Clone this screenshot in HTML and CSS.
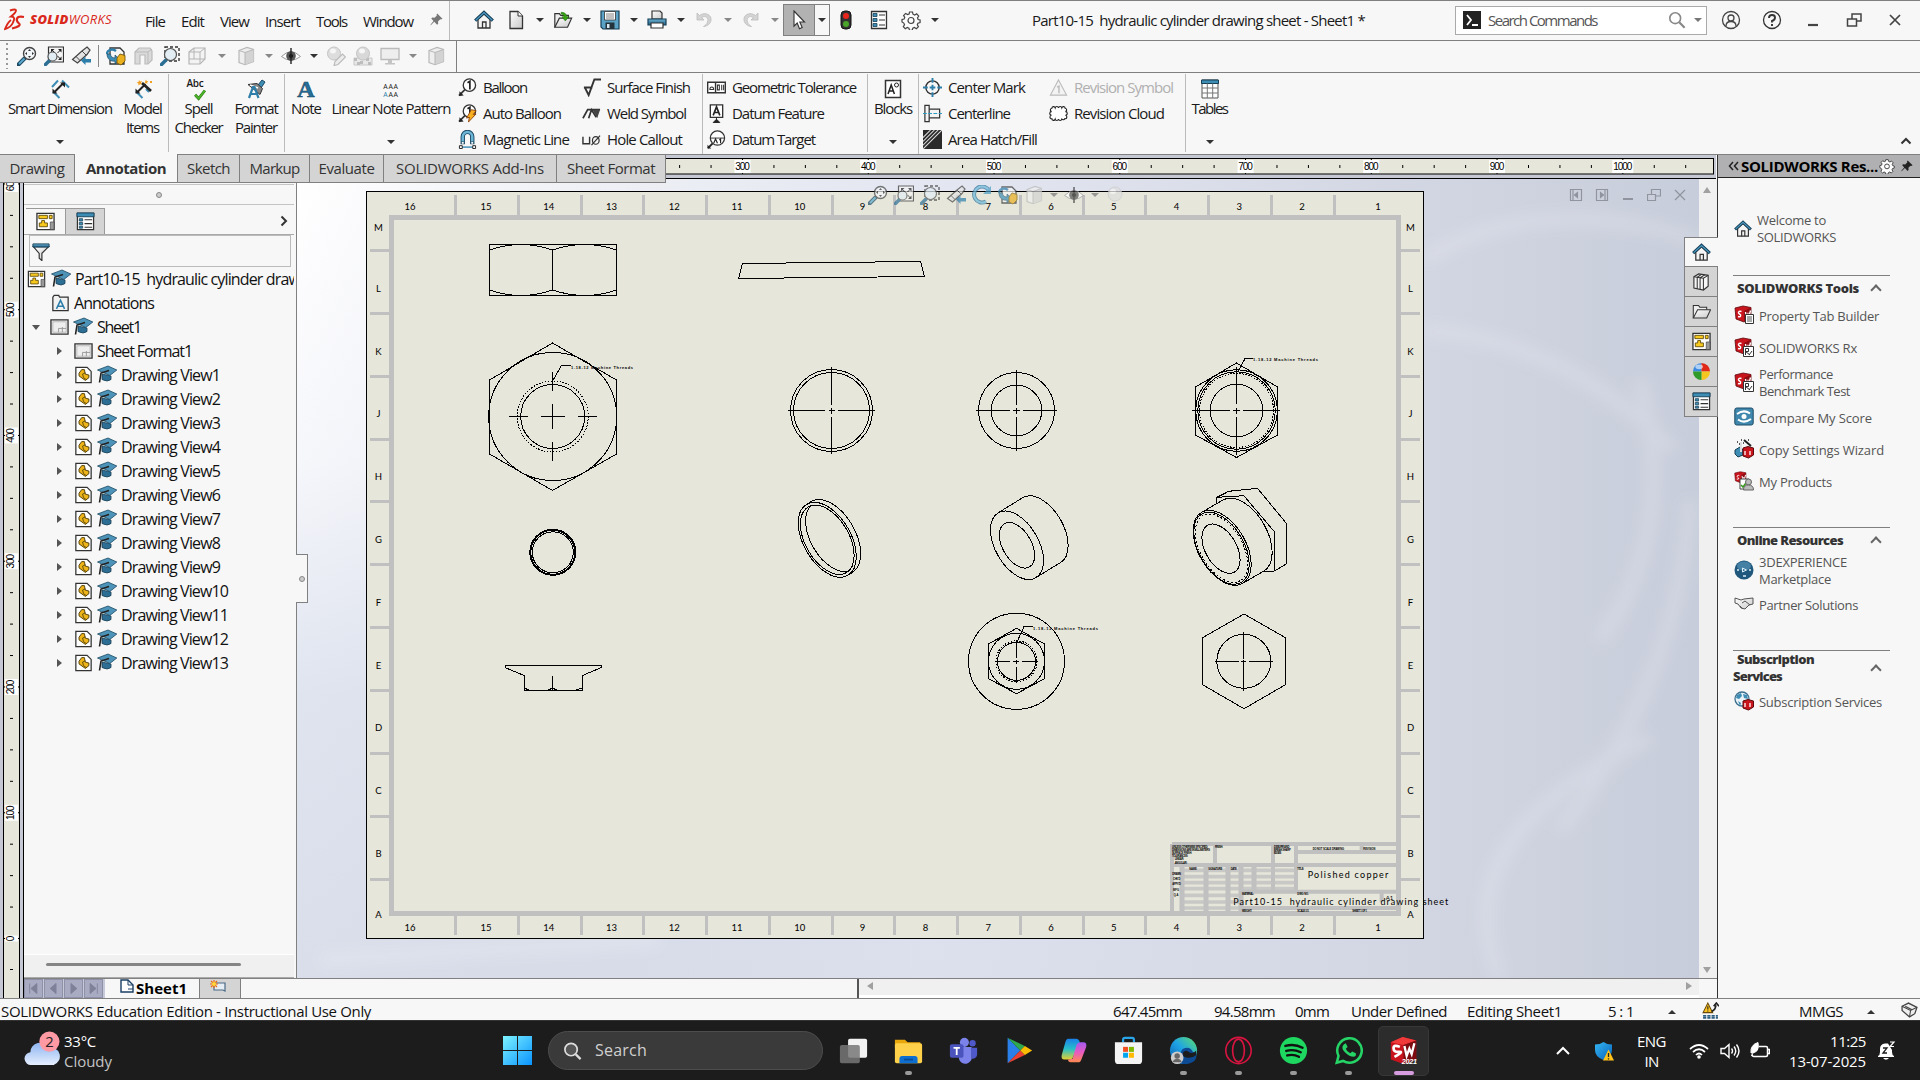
FILE: index.html
```html
<!DOCTYPE html>
<html lang="en">
<head>
<meta charset="utf-8">
<title>Part10-15 hydraulic cylinder drawing sheet - Sheet1</title>
<link rel="stylesheet" href="styles.css">
</head>
<body>
<svg class="defs" width="0" height="0">
  <defs>
    <linearGradient id="gBlue" x1="0" y1="0" x2="0" y2="1"><stop offset="0" stop-color="#6fb3d3"/><stop offset="1" stop-color="#1d5f85"/></linearGradient>
    <linearGradient id="gGrey" x1="0" y1="0" x2="1" y2="1"><stop offset="0" stop-color="#fff"/><stop offset="1" stop-color="#c9c9c9"/></linearGradient>
    <linearGradient id="gWin" x1="0" y1="0" x2="1" y2="1"><stop offset="0" stop-color="#7df3ff"/><stop offset="1" stop-color="#0a93ff"/></linearGradient>
    <linearGradient id="gCloud" x1="0" y1="0" x2="0" y2="1"><stop offset="0" stop-color="#8db4f0"/><stop offset="1" stop-color="#e6efff"/></linearGradient>
    <linearGradient id="gEdge" x1="0" y1="1" x2="1" y2="0"><stop offset="0" stop-color="#0c59a4"/><stop offset=".5" stop-color="#1ea3e6"/><stop offset="1" stop-color="#5fe06a"/></linearGradient>
    <linearGradient id="gCopL" x1="0" y1="0" x2="0" y2="1"><stop offset="0" stop-color="#1b7fe8"/><stop offset=".5" stop-color="#28c0c8"/><stop offset="1" stop-color="#e8d032"/></linearGradient>
    <linearGradient id="gCopR" x1="0" y1="0" x2="0" y2="1"><stop offset="0" stop-color="#a45af0"/><stop offset=".5" stop-color="#e85ac0"/><stop offset="1" stop-color="#ff8a50"/></linearGradient>
    <linearGradient id="gShield" x1="0" y1="0" x2="1" y2="1"><stop offset="0" stop-color="#35b8f5"/><stop offset="1" stop-color="#0860b8"/></linearGradient>
  </defs>

  <symbol id="home" viewBox="0 0 20 20"><path d="M4 9.5V18h12V9.5L10 4z" fill="#f4f4f4" stroke="#333" stroke-width="1.3"/><path d="M8.500 18v-6h3.500v6" fill="none" stroke="#333" stroke-width="1.3"/><path d="M1.200 10.600L10 2.400l8.800 8.200" fill="none" stroke="#163f58" stroke-width="3.200"/><path d="M1.800 10.200L10 2.600l8.200 7.600" fill="none" stroke="#4d9cc4" stroke-width="1.200"/></symbol>
  <symbol id="newdoc" viewBox="0 0 20 20"><path d="M4 1.500h8l4.500 4.500v12.500H4z" fill="url(#gGrey)" stroke="#333" stroke-width="1.3"/><path d="M12 1.500V6h4.500" fill="#fff" stroke="#333" stroke-width="1"/></symbol>
  <symbol id="open" viewBox="0 0 22 20"><path d="M2 18V3h5l1.500 2H17v4" fill="#eee" stroke="#333" stroke-width="1.300"/><path d="M2 18l5-10h13.500L16 18z" fill="url(#gGrey)" stroke="#333" stroke-width="1.300"/><path d="M9 1.500c4 0 6 2 6 5h2.500L13.500 11 9.800 6.500H12C12 4.500 11 3.500 9 3.500z" fill="#36a112" stroke="#1f6b0a" stroke-width=".6"/></symbol>
  <symbol id="save" viewBox="0 0 20 20"><path d="M1 1h18v18H3l-2-2z" fill="#5ba3c6" stroke="#173f56" stroke-width="1.200"/><path d="M4.500 1.500h11V10h-11z" fill="#fff" stroke="#333" stroke-width=".8"/><path d="M6 4h8M6 6h8M6 8h8" stroke="#666" stroke-width=".8"/><path d="M5.500 12.500h9V19h-9z" fill="#23323b"/><path d="M7 14h2.500v4H7z" fill="#d8e8f0"/></symbol>
  <symbol id="print" viewBox="0 0 20 20"><path d="M5 9V1h8l2 2v6z" fill="url(#gGrey)" stroke="#333" stroke-width="1.200"/><path d="M1 9h18v6H1z" fill="url(#gBlue)" stroke="#173f56" stroke-width="1.200"/><path d="M4 13h12v5H4z" fill="#fff" stroke="#333" stroke-width="1.200"/></symbol>
  <symbol id="undo" viewBox="0 0 20 20"><path d="M3 3v7h7L7.500 7.500C12 5 15 8 13.500 12c-.6 2-2 3.500-4 4.500 5-.5 8-4 7.500-8C16.400 4 10 2 5.500 5.500z" fill="#d4d4d4" stroke="#bbb" stroke-width=".8"/></symbol>
  <symbol id="cursor" viewBox="0 0 20 20"><path d="M5 1l10.500 11H10.800l2.400 5.500-2.700 1.200L8.200 13 5 16.200z" fill="#fff" stroke="#333" stroke-width="1.100"/></symbol>
  <symbol id="traffic" viewBox="0 0 20 20"><rect x="5" y="1" width="10" height="18" rx="4" fill="#333" stroke="#111"/><circle cx="10" cy="6" r="3" fill="#e8261c"/><circle cx="10" cy="14" r="3" fill="#4aa52a"/></symbol>
  <symbol id="listp" viewBox="0 0 20 20"><path d="M2.500 1.500h15v17h-15z" fill="#fff" stroke="#333" stroke-width="1.300"/><path d="M4 3.500h4v3H4zM4 8.500h4v3H4zM4 13.500h4v3H4z" fill="#3d8db5" stroke="#173f56" stroke-width=".8"/><path d="M10 5h6M10 10h6M10 15h6" stroke="#333" stroke-width="1.200"/></symbol>
  <symbol id="gear" viewBox="0 0 20 20"><path d="M8.500 2h3l.5 2.200 1.700.8 2-1.200 2 2.200-1.200 1.900.6 1.600 2 .5v2.600l-2.200.6-.6 1.500 1.100 2-2 2-2-1.200-1.600.7-.6 2.100H8.500l-.6-2.200-1.600-.6-2 1.200-2-2 1.200-2-.7-1.600L1 12V9.500l2.100-.5.700-1.600L2.600 5.500l2-2.100 2 1.200 1.500-.6z" fill="#fbfbfb" stroke="#444" stroke-width="1.200"/><circle cx="10" cy="10.500" r="3" fill="none" stroke="#444" stroke-width="1.200"/></symbol>
  <symbol id="pin" viewBox="0 0 20 20"><path d="M11 2l7 7-2 1-1-.5-3 3 .3 3L10.800 17 7 13l-5 5 .2-1.500L6 12 3 8.700l1.500-1.300 3 .3 3-3L10 3.500z" fill="currentColor"/></symbol>
  <symbol id="zoomfit" viewBox="0 0 20 20"><path d="M1.500 18.500l6-6" stroke="#1d4a66" stroke-width="4" stroke-linecap="round"/><path d="M2 18l5.500-5.500" stroke="#5aa9cc" stroke-width="2"/><circle cx="12.500" cy="7.500" r="6" fill="#f2f6f8" stroke="#444" stroke-width="1.400"/><path d="M12.500 3l1.500 2h-3zM12.500 12l1.500-2h-3zM8 7.500l2-1.500v3zM17 7.500l-2-1.500v3z" fill="#333"/></symbol>
  <symbol id="zoomarea" viewBox="0 0 20 20"><path d="M4.500 1h15v15h-15z" fill="#f4f4f4" stroke="#333" stroke-width="1.200"/><path d="M7 3h3.500L7 6.500zM17.500 3H14l3.500 3.500zM17.500 14V10.500L14 14z" fill="#222"/><path d="M8 4l3 3M16.500 4l-3 3M16.500 13l-3-3" stroke="#222"/><path d="M1.500 18.500l4-4" stroke="#2d6f94" stroke-width="3.500" stroke-linecap="round"/><circle cx="8.500" cy="10.500" r="4.500" fill="#e2eef4" stroke="#555" stroke-width="1.200"/></symbol>
  <symbol id="zoomsel" viewBox="0 0 20 20"><path d="M5 1h14v14H5z" fill="none" stroke="#333" stroke-width="1.400" stroke-dasharray="3 2"/><path d="M1.500 18.500l4.500-4.500" stroke="#2d6f94" stroke-width="3.500" stroke-linecap="round"/><circle cx="10.500" cy="8.500" r="6" fill="#e2eef4" stroke="#555" stroke-width="1.200"/></symbol>
  <symbol id="prevview" viewBox="0 0 20 20"><path d="M16 1l3 3-3 4.500L6.500 17 1.500 13.500 11 5z" fill="url(#gGrey)" stroke="#444" stroke-width="1.200"/><path d="M5 10.500l4 4M11 5l4 4" stroke="#444"/><path d="M10 14.500l4.500-4v2.500H20v3.500h-5.500V19z" fill="#2d7faa"/></symbol>
  <symbol id="rebuild" viewBox="0 0 20 20"><path d="M4 8V2h10l4 4v12H4v-4" fill="#f6f6f6" stroke="#333" stroke-width="1.300"/><path d="M1 8c0-4 5-6 9-3" fill="none" stroke="#2d7faa" stroke-width="2.500"/><path d="M1 8c0 5 4 8 8 7v3l5-4.500L9 9v3C6 12 4.500 10 4.500 8z" fill="#3d8db5" stroke="#1d4a66" stroke-width=".7"/><path d="M11 12l3-4 5 1.500V15l-4 4-4-2z" fill="#eab020" stroke="#7a5a08" stroke-width=".9"/></symbol>
  <symbol id="section" viewBox="0 0 20 20"><path d="M2 6l4-4h11l2 3v9l-4 4h-3V9H7v9H2z" fill="#dadada" stroke="#bbb" stroke-width="1.200"/><path d="M2 6h13V18M15 6l4-3" fill="none" stroke="#bbb"/></symbol>
  <symbol id="cubeW" viewBox="0 0 20 20"><path d="M2 6l5-4h11v11l-5 5H2z" fill="#f3f3f3" stroke="#b5b5b5" stroke-width="1.200"/><path d="M2 6h11v12M13 6l5-4M7 2v11H2M7 13h11" fill="none" stroke="#b5b5b5"/></symbol>
  <symbol id="cube" viewBox="0 0 20 20"><path d="M3 4.500L11 1.500l6.500 2v12L9 18.700 3 16.500z" fill="#eee" stroke="#b8b8b8" stroke-width="1.200"/><path d="M9 6.500v12l8.500-3v-12z" fill="#d3d3d3"/><path d="M3 4.500l6 2 8.500-3M9 6.500v12" fill="none" stroke="#b8b8b8"/></symbol>
  <symbol id="eye" viewBox="0 0 20 20"><path d="M.5 10.500Q10 1 19.500 10.500 10 18 .5 10.500z" fill="#fff" stroke="#999" stroke-width="1"/><circle cx="10" cy="10" r="4.800" fill="#555"/><circle cx="10" cy="10" r="2" fill="#111"/><path d="M10 2v16" stroke="#222" stroke-width="1.400"/></symbol>
  <symbol id="ballpen" viewBox="0 0 20 20"><circle cx="8" cy="7.500" r="6.500" fill="#ddd" stroke="#c4c4c4"/><ellipse cx="7" cy="5" rx="3" ry="2.500" fill="#f6f6f6"/><path d="M9 15.500l7.500-7.500 3 3-7.500 7.500-4 1z" fill="#ececec" stroke="#bbb" stroke-width="1.100"/></symbol>
  <symbol id="ballchk" viewBox="0 0 20 20"><path d="M1 12h18v7H1z" fill="#e8e8e8" stroke="#c8c8c8"/><path d="M1 12h3v3H1zM7 15h3v3H7zM13 12h3v3h-3zM4 16h3v3H4zM15 16h3v3h-3z" fill="#bdbdbd"/><circle cx="10" cy="7.500" r="6.500" fill="#d8d8d8" stroke="#c4c4c4"/><ellipse cx="9" cy="5" rx="3" ry="2.500" fill="#f6f6f6"/></symbol>
  <symbol id="ball" viewBox="0 0 20 20"><circle cx="10" cy="9" r="7" fill="#dedede" stroke="#c8c8c8"/><ellipse cx="8" cy="6.500" rx="3" ry="2.500" fill="#fafafa"/></symbol>
  <symbol id="monitor" viewBox="0 0 20 20"><path d="M1 2.500h18v11H1z" fill="#eee" stroke="#bbb" stroke-width="1.300"/><path d="M8 14h4v3h3v1.500H5V17h3z" fill="#c4c4c4"/></symbol>
  <symbol id="rotate" viewBox="0 0 20 20"><path d="M17 5.500A8 8 0 1 0 14 16.500" fill="none" stroke="#2d6f94" stroke-width="4"/><path d="M17 5.500A8 8 0 1 0 14 16.500" fill="none" stroke="#6cb9dc" stroke-width="2.200"/><path d="M19 1v8h-8z" fill="#4a9cc4"/></symbol>
  <symbol id="smartdim" viewBox="0 0 20 20"><path d="M2 8l6-6.500M12 1.500L19 8.500M3 12.500L9.500 19" stroke="#3d8db5" stroke-width="2"/><path d="M4.500 13l9-9" stroke="#222" stroke-width="2"/><path d="M2.500 14.500V9.500l5 5zM15 3.500v5l-5-5z" fill="#222"/></symbol>
  <symbol id="modelitems" viewBox="0 0 20 20"><path d="M3 12.500L9.500 19M13 10l3 3" stroke="#3d8db5" stroke-width="2"/><path d="M4.500 13l8-8" stroke="#222" stroke-width="2"/><path d="M2.500 14.500V9.500l5 5z" fill="#222"/><path d="M9 4l9 8" stroke="#222" stroke-width="2.800"/><path d="M6 1l1 1.500L9 2 8 4l1 1.500-2-.3L5.500 6.500 5.400 4.500 3.500 3.500l2-.6zM13 .5l.8 1.500 1.700.3-1.300 1 .2 1.700-1.400-.9-1.500.6.500-1.600zM17 2h2v2h-2z" fill="#f0a020"/></symbol>
  <symbol id="check" viewBox="0 0 20 20"><path d="M3 11l5 5.500L17 5" fill="none" stroke="#2b7a12" stroke-width="4"/><path d="M3 11l5 5.500L17 5" fill="none" stroke="#4db52a" stroke-width="2.400"/></symbol>
  <symbol id="fmtpaint" viewBox="0 0 20 20"><path d="M12 6l4-5 3 2-4 6z" fill="#3d8db5" stroke="#1d4a66"/><path d="M2 5.500l9-1 5.500 5-2.500 6z" fill="#888" stroke="#333"/><path d="M4 6l8 3" stroke="#fff" stroke-width="1.500"/><path d="M3 19L7 8h1.500l4 11M5 15h6" fill="none" stroke="#2d7faa" stroke-width="2.200"/></symbol>
  <symbol id="balloon" viewBox="0 0 20 20"><path d="M1 18.500l6.500-6.500" stroke="#333" stroke-width="1.800"/><path d="M1.500 19v-5l4.500 4.500z" fill="#222"/><circle cx="12" cy="7.500" r="6.500" fill="#fff" stroke="#333" stroke-width="1.400"/><path d="M10 5l2.500-1.500V12" fill="none" stroke="#222" stroke-width="1.800"/></symbol>
  <symbol id="bolt" viewBox="0 0 20 20"><path d="M14 6l5 1-3 4 3-.5-8 8.500 1-5-3 .8z" fill="#f8b020" stroke="#8a3c08" stroke-width=".9"/></symbol>
  <symbol id="magnet" viewBox="0 0 20 20"><path d="M5 15V7a5 5 0 0 1 10 0v8" fill="none" stroke="#1d4a66" stroke-width="4.600"/><path d="M5 12V7a5 5 0 0 1 10 0v5" fill="none" stroke="#6cb5d6" stroke-width="2.600"/><path d="M4 12.500h2v2H4zM14 12.500h2v2h-2z" fill="#fff"/><path d="M3 18h14" stroke="#3d8db5" stroke-width="1.500"/><path d="M1.500 16.500h3v3h-3zM15.500 16.500h3v3h-3z" fill="#fff" stroke="#222"/></symbol>
  <symbol id="surf" viewBox="0 0 20 20"><path d="M2 10h9M3 10l4 8L13 1.500h7" fill="none" stroke="#333" stroke-width="2"/></symbol>
  <symbol id="weld" viewBox="0 0 20 20"><path d="M1 15L6 6h13M7 15l3-9 5 8" fill="none" stroke="#333" stroke-width="1.800"/><path d="M11 6h8l-3 9z" fill="#444"/></symbol>
  <symbol id="hole" viewBox="0 0 20 20"><path d="M1 7v7.500h7V7" fill="none" stroke="#333" stroke-width="1.500"/><ellipse cx="14.500" cy="11" rx="3.500" ry="4" fill="none" stroke="#333" stroke-width="1.300"/><path d="M10 16l9-10" stroke="#333" stroke-width="1.300"/></symbol>
  <symbol id="geotol" viewBox="0 0 20 20"><path d="M.7 4.500h18.600v11H.7zM9 4.500v11" fill="#fff" stroke="#333" stroke-width="1.500"/><path d="M3 12a2 2.500 0 0 1 4 0zM11 7.500h2v5h-2zM15.500 7v6M17.500 7v6" fill="none" stroke="#333" stroke-width="1.100"/></symbol>
  <symbol id="datumf" viewBox="0 0 20 20"><path d="M3.500 1h13v13h-13z" fill="#fff" stroke="#333" stroke-width="1.400"/><path d="M6.500 12L10 3l3.500 9M7.500 9h5" fill="none" stroke="#222" stroke-width="1.700"/><path d="M10 14v3M6.500 19.500L10 16l3.500 3.500z" fill="#222" stroke="#222"/></symbol>
  <symbol id="datumt" viewBox="0 0 20 20"><path d="M1 19l5-5" stroke="#222" stroke-width="2"/><path d="M.5 19.500v-4l4 4z" fill="#222"/><circle cx="11" cy="8.500" r="7.500" fill="#fff" stroke="#333" stroke-width="1.300"/><path d="M3.500 8.500h15" stroke="#333"/><path d="M7 14l2-4.500 2 4.500M13 10.500l1.300-1V14" fill="none" stroke="#222" stroke-width="1.200"/></symbol>
  <symbol id="blocks" viewBox="0 0 20 20"><path d="M2.500 1.500h15v17h-15z" fill="#fff" stroke="#333" stroke-width="1.500"/><path d="M5 15l3.200-9 3.200 9M6 12h4.500" fill="none" stroke="#222" stroke-width="1.500"/><circle cx="13.500" cy="6" r="2" fill="none" stroke="#222"/></symbol>
  <symbol id="centermark" viewBox="0 0 20 20"><circle cx="10" cy="10" r="7" fill="none" stroke="#333" stroke-width="1.500"/><path d="M10 0v5M10 15v5M0 10h5M15 10h5M10 7v6M7 10h6" stroke="#2d7faa" stroke-width="2"/></symbol>
  <symbol id="centerline" viewBox="0 0 20 20"><path d="M2 1.500h4.500v17H2zM6.500 5.500h11v9h-11z" fill="#f4f4f4" stroke="#333" stroke-width="1.300"/><path d="M0 10h20" stroke="#2d9cc4" stroke-width="1.300" stroke-dasharray="4 1.500"/></symbol>
  <symbol id="hatch" viewBox="0 0 20 20"><path d="M0 0h20v20H0z" fill="#2a2a2a"/><path d="M0 8L8 0M0 12L12 0M0 16L16 0M0 20L20 0" stroke="#ddd" stroke-width="1.100"/></symbol>
  <symbol id="revsym" viewBox="0 0 20 20"><path d="M10 2l8.500 16h-17z" fill="#f3f3f3" stroke="#bbb" stroke-width="1.200"/><path d="M8.500 9.500l2-1V16" fill="none" stroke="#bbb" stroke-width="1.500"/></symbol>
  <symbol id="revcloud" viewBox="0 0 20 20"><path d="M3 4.500a1.800 1.800 0 0 1 3.500-.5 1.800 1.800 0 0 1 3.500 0 1.800 1.800 0 0 1 3.500 0 1.800 1.800 0 0 1 3.500.5 1.800 1.800 0 0 1 .3 3.500 1.800 1.800 0 0 1 0 3.800 1.800 1.800 0 0 1-.8 3.700 1.800 1.800 0 0 1-3 .5 1.800 1.800 0 0 1-3.500 0 1.800 1.800 0 0 1-3.500 0 1.800 1.800 0 0 1-3.500-.5 1.800 1.800 0 0 1-.3-3.700 1.800 1.800 0 0 1 0-3.800 1.800 1.800 0 0 1 .3-3.500z" fill="#fff" stroke="#222" stroke-width="1.200"/></symbol>
  <symbol id="table" viewBox="0 0 20 20"><path d="M2 1h16v18H2z" fill="#fff" stroke="#555"/><path d="M1.500 1h17v3.500h-17z" fill="#3d8db5" stroke="#173f56"/><path d="M2 9h16M2 14h16M7.300 4.500V19M12.700 4.500V19" stroke="#777"/></symbol>
  <symbol id="drwicon" viewBox="0 0 20 20"><path d="M1 1.500h18v17H1z" fill="#fff" stroke="#333" stroke-width="1.400"/><path d="M3 3.500h9v3.500H3zM14 3.500h3v3.500h-3zM6 11.500V9h3v2.500h3v4H3.500v-4z" fill="#f7c81e" stroke="#5a4506" stroke-width=".9"/><path d="M15 10.500h4v8h-4z" fill="#9a9a9a" stroke="#444" stroke-width=".7"/></symbol>
  <symbol id="propicon" viewBox="0 0 20 20"><path d="M1.500 1.500h17v17h-17z" fill="#fff" stroke="#333" stroke-width="1.300"/><path d="M1 1h18v4H1z" fill="#3d8db5" stroke="#173f56"/><path d="M3.500 7h3.500v2.500H3.500zM3.500 11h3.500v2.500H3.500zM3.500 15h3.500v2H3.500z" fill="#3d8db5" stroke="#173f56" stroke-width=".8"/><path d="M9 8.200h8M9 12.200h8M9 16h8" stroke="#333" stroke-width="1.200"/></symbol>
  <symbol id="funnel" viewBox="0 0 20 20"><path d="M1.500 4l6.500 7.500V17l3 2.500v-8L18.500 4z" fill="url(#gGrey)" stroke="#333" stroke-width="1.300"/><path d="M1 1h18v3.500H1z" fill="url(#gBlue)" stroke="#173f56"/></symbol>
  <symbol id="hat" viewBox="0 0 20 18"><path d="M5 9l9 2v3.500q-3.500 3-9 0z" fill="#2d6f94" stroke="#173f56" stroke-width=".8"/><path d="M.5 5L11 1l8.800 4-7 5.500z" fill="#4d93b8" stroke="#1d4a66" stroke-width=".8"/><path d="M12 5.500L4 8 2.500 17.500" fill="none" stroke="#222" stroke-width="1.600"/></symbol>
  <symbol id="annot" viewBox="0 0 20 20"><path d="M1.500 18.500v-15L3 1.500h5l1 2h9.500v15z" fill="#f2f2f2" stroke="#333" stroke-width="1.400"/><path d="M5.500 16.500L10 7l4.500 9.500M7.500 13.500h5" fill="none" stroke="#2d7faa" stroke-width="1.700"/></symbol>
  <symbol id="sheet" viewBox="0 0 20 17"><path d="M1 1h18v15H1z" fill="#eee" stroke="#333" stroke-width="1.400"/><path d="M3 3h14v11H3z" fill="none" stroke="#bbb"/><path d="M9 14v-4h8M13 8.500V14" fill="none" stroke="#999"/></symbol>
  <symbol id="dview" viewBox="0 0 20 20"><path d="M1.500 1.500h12.500l4.500 4.500v12.500h-17z" fill="#fff" stroke="#333" stroke-width="1.400"/><path d="M5 8l3-4h3l1 5 4 1v3l-4 3-7-5z" fill="#edb51a" stroke="#4a3906" stroke-width="1"/><path d="M9 9l1 4 3 2M9 9l3-1.500" fill="none" stroke="#4a3906" stroke-width=".9"/></symbol>
  <symbol id="books" viewBox="0 0 20 20"><path d="M2 5l5-3 10 1.500V15l-5 4-10-2z" fill="#f6f6f6" stroke="#333" stroke-width="1.200"/><path d="M2 5l10 1.500L17 3.500M12 6.500V19M5.500 5.500v12M8.500 6v12.500M5.500 5.500l4.500-3M8.500 6l5-3" fill="none" stroke="#333" stroke-width="1.100"/></symbol>
  <symbol id="folder" viewBox="0 0 22 20"><path d="M1.500 17.500V3h6l1.500 2h8v3" fill="#eee" stroke="#333" stroke-width="1.200"/><path d="M1.500 17.500l5-9.500h15l-4.500 9.500z" fill="url(#gGrey)" stroke="#333" stroke-width="1.200"/></symbol>
  <symbol id="sphere" viewBox="0 0 20 20"><path d="M10 10V1a9 9 0 0 0-9 9z" fill="#3a8ae0"/><path d="M10 10h9a9 9 0 0 0-9-9z" fill="#e02818"/><path d="M10 10v9a9 9 0 0 0 9-9z" fill="#f5c520"/><path d="M10 10H1a9 9 0 0 0 9 9z" fill="#2f9a28"/><ellipse cx="7.500" cy="5" rx="4" ry="2.500" fill="#fff" opacity=".6"/></symbol>
  <symbol id="sw" viewBox="0 0 20 20"><path d="M1 3l8-2 8 1.500V13l-7 4-8-3z" fill="#c8141c" stroke="#5c080c" stroke-width=".8"/><path d="M10 6v11l7-4V2.500z" fill="#8e0c12"/><path d="M7.500 6.500c-3-1-4 1.500-2 2.500s1.500 3.500-1.500 2.500M11.500 7l1 6 1.500-4 1 2.500 1.500-6" fill="none" stroke="#fff" stroke-width="1.400"/></symbol>
  <symbol id="rx" viewBox="0 0 20 20"><path d="M9.500 9.500h10v10h-10z" fill="#fff" stroke="#333"/><path d="M11.500 18v-6.500h3v3h-3l4.500 3.500M18 14l-3 4" fill="none" stroke="#333"/></symbol>
  <symbol id="doc" viewBox="0 0 20 20"><path d="M11.500 9.500h8v9h-8z" fill="#fff" stroke="#333"/><path d="M13 12h5M13 14h5M13 16h5" stroke="#555"/></symbol>
  <symbol id="score" viewBox="0 0 20 20"><rect x=".8" y="1" width="18.400" height="17" rx="2" fill="#3f87ad" stroke="#1d4a66"/><circle cx="10" cy="9.500" r="2.500" fill="#fff"/><path d="M3 7q7-5 13-.5M17 12q-7 5-13 .5" fill="none" stroke="#fff" stroke-width="2"/></symbol>
  <symbol id="wizard" viewBox="0 0 20 20"><path d="M1 11l5-3 3 3v5l-5 2-3-3z" fill="#3d8db5" stroke="#173f56"/><path d="M9 9l5-1.500 5.500 1.500v7l-5 3-5.500-2z" fill="#c8141c" stroke="#5c080c"/><path d="M11 12v4M16 12v4" stroke="#fff" stroke-width="1.300"/><path d="M10 1l7 6" stroke="#222" stroke-width="2"/><path d="M3 3h1M7 1h1M5 5h1M9 4h1M14 1h1" stroke="#222" stroke-width="1.500"/><path d="M7 3v10" stroke="#ddd" stroke-width="2"/></symbol>
  <symbol id="person" viewBox="0 0 20 20"><path d="M6 8h9v10H6z" fill="#fff" stroke="#444"/><path d="M7 14l2 2 3-4" fill="none" stroke="#3a9a20" stroke-width="1.600"/><circle cx="14.500" cy="11" r="3" fill="#bbb" stroke="#666"/><path d="M9.500 19q0-5 5-5t5 5z" fill="#bbb" stroke="#666"/></symbol>
  <symbol id="globe3d" viewBox="0 0 20 20"><circle cx="10" cy="10" r="9.500" fill="#1f587c"/><ellipse cx="10" cy="6" rx="7" ry="4.500" fill="#5f9cc0" opacity=".6"/><path d="M8.500 8l4 2-4 2z" fill="none" stroke="#d8ecf6"/><path d="M3 10h2M15 10h2M9 16h3" stroke="#d8ecf6" stroke-width="1.500"/></symbol>
  <symbol id="hands" viewBox="0 0 20 20"><path d="M1 4l6 2 3-1 9-1v6l-4 1-4 4-4-1-3-4-3-1z" fill="url(#gGrey)" stroke="#555"/><path d="M8 9l3-2 5 4M6 12l3 3" fill="none" stroke="#555"/></symbol>
  <symbol id="subs" viewBox="0 0 20 20"><circle cx="8" cy="8" r="7" fill="#e8f2f7" stroke="#3b6f8e" stroke-width="1.300"/><path d="M3 4l4-2 1 3-3 3-3-1zM9 3l4 1 1 4-4-1zM4 10l3 2-1 3z" fill="#3d8db5"/><path d="M9 10l5-1.500 5.500 1.500v6l-5 3-5.500-2z" fill="#c8141c" stroke="#5c080c"/><path d="M11 12v4M16 12v4" stroke="#fff" stroke-width="1.300"/></symbol>
</svg>

<header class="titlebar">
  <div class="brand">
    <svg class="ds" viewBox="0 0 21 24"><path d="M6 2.500q6-2 6 0t-5 6q5 0 2 6-2 5-8 6.500 3-7 6-9" fill="none" stroke="#da291c" stroke-width="1.900"/><path d="M20 9q-6-1-7 1.500t2 5-7 5" fill="none" stroke="#da291c" stroke-width="2.200"/></svg>
    <span class="brand-name" data-w="82"><b>SOLID</b>WORKS</span>
  </div>
  <nav class="menu">
    <span data-w="20">File</span><span data-w="23">Edit</span><span data-w="29">View</span><span data-w="35">Insert</span><span data-w="31">Tools</span><span data-w="50">Window</span>
  </nav>
  <svg class="menu-pin"><use href="#pin"/></svg>
  <div class="quick">
    <svg><use href="#home"/></svg><svg><use href="#newdoc"/></svg><i class="caret"></i><svg><use href="#open"/></svg><i class="caret"></i><svg><use href="#save"/></svg><i class="caret"></i><svg><use href="#print"/></svg><i class="caret"></i><svg><use href="#undo"/></svg><i class="caret dim"></i><svg class="flip"><use href="#undo"/></svg><i class="caret dim"></i><span class="cursor-btn"><svg><use href="#cursor"/></svg></span><span class="cursor-drop"><i class="caret"></i></span><svg><use href="#traffic"/></svg><svg><use href="#listp"/></svg><svg><use href="#gear"/></svg><i class="caret"></i>
  </div>
  <div class="doc-title"><span data-w="333">Part10-15  hydraulic cylinder drawing sheet - Sheet1 *</span></div>
  <div class="search">
    <svg viewBox="0 0 18 18" width="18" height="18"><path d="M0 0h18v18H0z" fill="#222"/><path d="M4 4l4 5-4 5M9 14h6" fill="none" stroke="#fff" stroke-width="1.800"/></svg>
    <span data-w="109">Search Commands</span>
    <svg class="mag" viewBox="0 0 20 20"><circle cx="8" cy="8" r="6" fill="none" stroke="#888" stroke-width="1.800"/><path d="M12.500 12.500l6 6" stroke="#888" stroke-width="2.400"/></svg>
    <i class="caret"></i>
  </div>
  <div class="win">
    <svg viewBox="0 0 20 20"><circle cx="10" cy="10" r="8.500" fill="none" stroke="#444" stroke-width="1.300"/><circle cx="10" cy="8" r="3" fill="none" stroke="#444" stroke-width="1.300"/><path d="M5 16q0-4.500 5-4.500t5 4.500" fill="none" stroke="#444" stroke-width="1.300"/></svg>
    <svg viewBox="0 0 20 20"><circle cx="10" cy="10" r="8.500" fill="none" stroke="#333" stroke-width="1.300"/><path d="M7 8q0-3 3-3t3 2.500-3 3.500v1.500M10 14v2" fill="none" stroke="#333" stroke-width="1.900"/></svg>
    <svg viewBox="0 0 20 20"><path d="M5 15h10" stroke="#444" stroke-width="2.200"/></svg>
    <svg viewBox="0 0 20 20"><path d="M3.500 9h9v7h-9zM8 9V4h9v7h-4.500" fill="none" stroke="#444" stroke-width="1.500"/></svg>
    <svg viewBox="0 0 20 20"><path d="M5 5l10 10M15 5L5 15" stroke="#444" stroke-width="1.700"/></svg>
  </div>
</header>

<div class="viewbar">
  <div class="viewtools">
    <i class="grip"></i>
    <svg><use href="#zoomfit"/></svg><svg><use href="#zoomarea"/></svg><svg><use href="#prevview"/></svg><i class="vline"></i><svg><use href="#rebuild"/></svg><svg><use href="#section"/></svg><svg><use href="#zoomsel"/></svg><svg><use href="#cubeW"/></svg><i class="caret dim"></i><svg><use href="#cube"/></svg><i class="caret dim"></i><svg><use href="#eye"/></svg><i class="caret"></i><svg><use href="#ballpen"/></svg><svg><use href="#ballchk"/></svg><svg><use href="#monitor"/></svg><i class="caret dim"></i><svg><use href="#cube"/></svg>
  </div>
</div>

<section class="ribbon">
  <div class="big w120"><svg><use href="#smartdim"/></svg><span data-w="104">Smart Dimension</span><i class="caret"></i></div>
  <div class="big w48"><svg><use href="#modelitems"/></svg><span data-w="38">Model</span><span data-w="33">Items</span></div>
  <div class="big w60 split"><div class="abc"><b data-w="17">Abc</b><svg><use href="#check"/></svg></div><span data-w="28">Spell</span><span data-w="48">Checker</span></div>
  <div class="big w56"><svg><use href="#fmtpaint"/></svg><span data-w="43">Format</span><span data-w="42">Painter</span></div>
  <div class="big w42 split"><b class="note-a">A</b><span data-w="30">Note</span></div>
  <div class="big w128"><div class="aaa"><span>AAA</span><span><em>A</em>AA</span></div><span data-w="119">Linear Note Pattern</span><i class="caret"></i></div>
  <div class="stack w124 first">
    <div><svg><use href="#balloon"/></svg><span data-w="44">Balloon</span></div>
    <div><svg viewBox="0 0 20 20"><use href="#balloon"/><use href="#bolt"/></svg><span data-w="78">Auto Balloon</span></div>
    <div><svg><use href="#magnet"/></svg><span data-w="86">Magnetic Line</span></div>
  </div>
  <div class="stack w122">
    <div><svg><use href="#surf"/></svg><span data-w="83">Surface Finish</span></div>
    <div><svg><use href="#weld"/></svg><span data-w="79">Weld Symbol</span></div>
    <div><svg><use href="#hole"/></svg><span data-w="75">Hole Callout</span></div>
  </div>
  <div class="stack w165 split">
    <div><svg><use href="#geotol"/></svg><span data-w="124">Geometric Tolerance</span></div>
    <div><svg><use href="#datumf"/></svg><span data-w="92">Datum Feature</span></div>
    <div><svg><use href="#datumt"/></svg><span data-w="83">Datum Target</span></div>
  </div>
  <div class="big w50 split"><svg><use href="#blocks"/></svg><span data-w="38">Blocks</span><i class="caret"></i></div>
  <div class="stack w127 split">
    <div><svg><use href="#centermark"/></svg><span data-w="77">Center Mark</span></div>
    <div><svg><use href="#centerline"/></svg><span data-w="62">Centerline</span></div>
    <div><svg><use href="#hatch"/></svg><span data-w="89">Area Hatch/Fill</span></div>
  </div>
  <div class="stack w140">
    <div class="off"><svg><use href="#revsym"/></svg><span data-w="99">Revision Symbol</span></div>
    <div><svg><use href="#revcloud"/></svg><span data-w="90">Revision Cloud</span></div>
  </div>
  <div class="big w48 split"><svg><use href="#table"/></svg><span data-w="36">Tables</span><i class="caret"></i></div>
  <svg class="collapse" viewBox="0 0 12 8"><path d="M1.500 6.500L6 2l4.500 4.500" fill="none" stroke="#333" stroke-width="2"/></svg>
</section>

<main class="work">
  <div class="left">
    <div class="tabrow">
      <div class="tab t1"><span data-w="55">Drawing</span></div>
      <div class="tab t2 on"><span data-w="80">Annotation</span></div>
      <div class="tab t3"><span data-w="43">Sketch</span></div>
      <div class="tab t4"><span data-w="50">Markup</span></div>
      <div class="tab t5"><span data-w="56">Evaluate</span></div>
      <div class="tab t6"><span data-w="148">SOLIDWORKS Add-Ins</span></div>
      <div class="tab t7"><span data-w="88">Sheet Format</span></div>
      <svg id="hruler" class="hruler" viewBox="666 155 1050 24"><rect x="666" y="155" width="1050" height="24" fill="#c6c9d3"/><rect x="640" y="158.500" width="1073.500" height="15.500" fill="#e6e6da" stroke="#000"/><path d="M666 178.500h1050" stroke="#000"/></svg>
    </div>
    <div class="body">
      <svg id="vruler" class="vruler" viewBox="0 183 24 815"><rect x="0" y="183" width="24" height="815" fill="#c6c9d3"/><rect x="3.500" y="170" width="16" height="850" fill="#e6e6da" stroke="#000"/><path d="M23.500 183v815" stroke="#000"/></svg>
      <div class="center">
        <div class="upper">
          <aside class="tree-panel">
            <div class="dotbar"><i class="dot"></i></div>
            <div class="ptabs"><span class="pt on"><svg><use href="#drwicon"/></svg></span><span class="pt"><svg><use href="#propicon"/></svg></span><svg class="chev" viewBox="0 0 8 12"><path d="M1.500 1.500L6 6l-4.500 4.500" fill="none" stroke="#333" stroke-width="2"/></svg></div>
            <div class="filter"><svg><use href="#funnel"/></svg></div>
            <ul id="tree" class="tree">
              <li class="l0"><svg><use href="#drwicon"/></svg><svg class="hat"><use href="#hat"/></svg><span class="long" data-w="245">Part10-15  hydraulic cylinder drawing</span></li>
              <li class="l1"><svg><use href="#annot"/></svg><span data-w="80">Annotations</span></li>
              <li class="l2"><i class="down"></i><svg><use href="#sheet"/></svg><svg class="hat"><use href="#hat"/></svg><span data-w="44">Sheet1</span></li>
              <li class="l3"><i class="right"></i><svg><use href="#sheet"/></svg><span data-w="95">Sheet Format1</span></li>
            </ul>
            <div class="hs"><i></i></div>
          </aside>
          <div class="canvas">
            <svg class="drawing" viewBox="297 179 1402 799">
              <defs>
                <linearGradient id="bg" x1="0" y1="0" x2="0" y2="1"><stop offset="0" stop-color="#fff"/><stop offset=".35" stop-color="#f6f7fb"/><stop offset=".65" stop-color="#dfe4ef"/><stop offset="1" stop-color="#d9deea"/></linearGradient>
                <linearGradient id="bgR" x1="0" y1="0" x2="1" y2="0"><stop offset="0" stop-color="#cdd2df" stop-opacity="0"/><stop offset=".45" stop-color="#dde1ee" stop-opacity=".8"/><stop offset=".8" stop-color="#d2d6e2"/><stop offset="1" stop-color="#c8cddb"/></linearGradient>
                <clipPath id="ringClip"><ellipse cx="827.300" cy="539.800" rx="38" ry="21.900" transform="rotate(60 827.300 539.800)"/></clipPath>
                <filter id="soft" x="-20%" y="-20%" width="140%" height="140%"><feGaussianBlur stdDeviation="7"/></filter>
              </defs>
              <rect x="297" y="179" width="1402" height="799" fill="url(#bg)"/>
              <rect x="297" y="179" width="1402" height="799" fill="url(#bgR)"/>
              <g fill="none" stroke="#fff" stroke-opacity=".16" stroke-width="14" filter="url(#soft)">
                <path d="M1424 330q140 10 250 120M1424 260q110-70 275-20M1640 380q40 150-40 260M1690 500q-10 180-130 330M1500 978q-60-140 150-240M320 960l340-20"/>
              </g>
              <rect x="366.500" y="191.500" width="1057" height="747" fill="#e6e6da" stroke="#000" shape-rendering="crispEdges"/>
              <g id="frame" stroke="#c0c0c0" stroke-width="3" fill="none" shape-rendering="crispEdges">
                <rect x="391.500" y="217.500" width="1007" height="696" stroke-width="5"/>
              </g>
              <g id="zones" class="zones"></g>

              <g class="views">
                <rect x="489.500" y="244.500" width="127" height="51"/>
                <path d="M552.500 250v40M489.500 250Q521 239 552.500 250 585 239 616.500 250M489.500 290Q521 301 552.500 290 585 301 616.500 290"/>
                <path d="M742.500 263.500L920.500 261.500 924.500 276.500 738.500 278.500z"/>

                <path d="M552.500 343L616.500 380V454L552.500 490.500 489.500 454V380z"/>
                <circle cx="552.700" cy="416.500" r="64"/><circle cx="552.700" cy="416.500" r="32"/><circle cx="552.700" cy="416.500" r="35.500" stroke-dasharray="1.500 1.500"/>
                <path d="M509 416.500h19M541 416.500h24M578 416.500h19M552.500 372v19M552.500 404v25M552.500 442v19M552.500 381L561.500 365.500H571"/>

                <circle cx="831.500" cy="410.500" r="41"/><circle cx="831.500" cy="410.500" r="38"/>
                <path d="M788 410.500h37M829 410.500h6M838 410.500h37M831.500 367v38M831.500 408v6M831.500 417v37"/>

                <circle cx="1016.500" cy="410.500" r="38"/><circle cx="1016.500" cy="410.500" r="25.300"/>
                <path d="M976 410.500h34M1013 410.500h7M1023 410.500h34M1016.500 370v35M1016.500 408v6M1016.500 417v34"/>

                <path d="M1236.500 363L1277.500 387V435L1236.500 457.500 1195.500 435V387z"/>
                <circle cx="1236.500" cy="410.500" r="40.800"/><circle cx="1236.500" cy="410.500" r="38.700"/><circle cx="1236.500" cy="410.500" r="37" stroke-dasharray="1.500 1.500"/><circle cx="1236.500" cy="410.500" r="26.300"/>
                <path d="M1192 410.500h38M1233 410.500h7M1243 410.500h37M1236.500 367v37M1236.500 408v6M1236.500 417v38M1238 372L1245 358.500H1253"/>

                <circle cx="552.800" cy="552.300" r="23"/><circle cx="552.800" cy="552.300" r="22"/><circle cx="552.800" cy="552.300" r="20.500"/>

                <ellipse cx="827.300" cy="539.800" rx="41" ry="23.700" transform="rotate(60 827.300 539.800)"/>
                <ellipse cx="827.300" cy="539.800" rx="38" ry="21.900" transform="rotate(60 827.300 539.800)"/>
                <g clip-path="url(#ringClip)"><ellipse cx="832.500" cy="536.800" rx="38" ry="21.900" transform="rotate(60 832.500 536.800)"/></g>
                <path d="M806.800 504.300L811.500 501.300A41 23.700 60 0 1 852.500 572.300L847.800 575.300"/>

                <ellipse cx="1017" cy="545.300" rx="37.500" ry="21.600" transform="rotate(60 1017 545.300)"/>
                <ellipse cx="1017" cy="545.300" rx="25" ry="14.400" transform="rotate(60 1017 545.300)"/>
                <path d="M998.200 512.800L1022.900 497.600A37.500 21.600 60 0 1 1060.400 562.600L1035.700 577.800"/>

                <ellipse cx="1222.200" cy="547.800" rx="41" ry="23.700" transform="rotate(60 1222.200 547.800)"/>
                <ellipse cx="1221.500" cy="548.200" rx="39.500" ry="22.500" transform="rotate(60 1221.500 548.200)"/>
                <ellipse cx="1221.500" cy="548.200" rx="37.500" ry="21" stroke-dasharray="2 2" transform="rotate(60 1221.500 548.200)"/>
                <ellipse cx="1221" cy="548.700" rx="27" ry="15.600" transform="rotate(60 1221 548.700)"/>
                <path d="M1201.700 512.300L1223 500A41 23.700 60 0 1 1264 571L1242.700 583.300"/>
                <path d="M1216.900 503V497.300L1228.800 491.300 1257.500 488.300 1286.300 523.300V564L1274.400 571 1263 571.700M1216.900 497.300L1243.800 495.700 1274.400 531.700V571"/>

                <path d="M505 665.500H601.500V667.500L582 675.700V690.500H524.500V675.700L505 667.500zM552.500 675.700V690M524.500 688l4 2h20l4-2 4 2h20l5-2"/>

                <circle cx="1016.500" cy="661.300" r="48"/><path d="M1016.500 628.300L1044.500 644V678.700L1016.500 693.700 988.500 678.700V644z"/><circle cx="1016.500" cy="661.300" r="28"/><circle cx="1016.500" cy="661.300" r="19"/><circle cx="1016.500" cy="661.300" r="20.500" stroke-dasharray="1.500 1.500"/>
                <path d="M995 661.500h15M1013 661.500h6M1022 661.500h16M1016.500 640v18M1016.500 660v4M1016.500 667v16M1017 642L1024 626.500H1033"/>

                <path d="M1244 614L1285.500 637.700V684.700L1244 708.700 1202.500 684.700V637.700z"/><circle cx="1243.800" cy="661.300" r="27"/>
                <path d="M1215 661.500h24M1241 661.500h5M1249 661.500h24M1243.500 632v27M1243.500 660v4M1243.500 664v27"/>
              </g>
              <g class="callouts">
                <text x="571" y="368.500" textLength="62">1.18-12 Machine Threads</text>
                <text x="1253" y="361" textLength="65">1.18-12 Machine Threads</text>
                <text x="1033" y="629.500" textLength="65">1.18-12 Machine Threads</text>
              </g>

              <g transform="translate(1140 820) scale(.33333)">
                <g stroke="#c0c0c0" fill="none" stroke-width="12">
                  <path d="M96 72H776M96 72V280M225 72V135M399 72V215M468 72V215M665 72V95M468 96H776M96 135H776M468 215H776M300 215H468M300 264H776M725 215V245"/>
                  <path stroke-width="15" d="M126 140V280M198 140V280M264 140V280M303 140V280M342 140V210"/>
                  <path stroke-width="11" d="M126 151H468M126 170H468M126 188H468M126 206H468M126 226H300M126 246H300M126 264H300" stroke-opacity=".8"/>
                </g>
                <g class="tb-small">
                  <text x="96" y="84" textLength="108">UNLESS OTHERWISE SPECIFIED:</text><text x="96" y="93" textLength="114">DIMENSIONS ARE IN MILLIMETERS</text><text x="96" y="102" textLength="60">SURFACE FINISH:</text><text x="96" y="111" textLength="48">TOLERANCES:</text><text x="104" y="120" textLength="28">LINEAR:</text><text x="104" y="131" textLength="38">ANGULAR:</text>
                  <text x="225" y="84" textLength="24">FINISH:</text><text x="402" y="84" textLength="46">DEBURR AND</text><text x="402" y="93" textLength="50">BREAK SHARP</text><text x="402" y="102" textLength="22">EDGES</text>
                  <text x="518" y="90" textLength="94">DO NOT SCALE DRAWING</text><text x="670" y="90" textLength="36">REVISION</text>
                  <text x="148" y="150" textLength="22">NAME</text><text x="205" y="150" textLength="42">SIGNATURE</text><text x="272" y="150" textLength="18">DATE</text>
                  <text x="97" y="164" textLength="26">DRAWN</text><text x="99" y="179" textLength="22">CHK'D</text><text x="97" y="194" textLength="26">APPV'D</text><text x="99" y="212" textLength="18">MFG</text><text x="101" y="227" textLength="14">Q.A</text>
                  <text x="472" y="149" textLength="20">TITLE:</text><text x="306" y="224" textLength="36">MATERIAL:</text><text x="472" y="224" textLength="34">DWG NO.</text><text x="306" y="275" textLength="30">WEIGHT:</text><text x="472" y="275" textLength="34">SCALE:1:5</text><text x="637" y="275" textLength="44">SHEET 1 OF 1</text>
                </g>
                <g class="tb-big">
                  <text x="503" y="173" textLength="242">Polished copper</text>
                  <text x="280" y="254" textLength="645" xml:space="preserve">Part10-15  hydraulic cylinder drawing sheet</text>
                  <text x="737" y="240" class="a1">A1</text>
                </g>
              </g>
            </svg>
            <div class="hud">
              <svg><use href="#zoomfit"/></svg><svg><use href="#zoomarea"/></svg><svg><use href="#zoomsel"/></svg><svg><use href="#prevview"/></svg><svg><use href="#rotate"/></svg><svg><use href="#rebuild"/></svg><svg><use href="#cube"/></svg><i class="caret"></i><svg><use href="#eye"/></svg><i class="caret"></i><svg><use href="#ball"/></svg>
            </div>
            <div class="docwin">
              <svg viewBox="0 0 14 14"><path d="M1.500 1.500h11v11h-11zM4 1.500v11"/><path d="M8.500 4.500v5L5.500 7z" fill="#8f949f"/></svg>
              <svg viewBox="0 0 14 14"><path d="M1.500 1.500h11v11h-11zM10 1.500v11"/><path d="M5.500 4.500v5l3-2.500z" fill="#8f949f"/></svg>
              <svg viewBox="0 0 14 14"><path d="M2 11h10" stroke-width="2"/></svg>
              <svg viewBox="0 0 14 14"><path d="M.5 6.500h8v6h-8zM4.500 6V1.500h9V8H9"/></svg>
              <svg viewBox="0 0 14 14"><path d="M2 2l10 10M12 2L2 12"/></svg>
            </div>
            <div class="handle"><i class="dot"></i></div>
          </div>
          <div class="vscroll"><i class="up"></i><i class="down"></i></div>
        </div>
        <div class="lower">
          <div class="vcr"><svg viewBox="0 0 20 20"><path d="M5.500 4v12M14 4v12l-7-6z"/></svg><svg viewBox="0 0 20 20"><path d="M13 4v12l-7-6z"/></svg><svg viewBox="0 0 20 20"><path d="M7 4v12l7-6z"/></svg><svg viewBox="0 0 20 20"><path d="M6 4v12l7-6zM14.500 4v12"/></svg></div>
          <div class="stab"><svg viewBox="0 0 14 14"><path d="M1 1h7l5 5v7H1z" fill="#fff" stroke="#1a3f66" stroke-width="1.400"/><path d="M8 1v5h5M8 10h5" fill="none" stroke="#1a3f66"/></svg><b data-w="51">Sheet1</b></div>
          <div class="snew"><svg viewBox="0 0 16 14"><path d="M4 3h11v8l-2-1H4z" fill="#e6edf3" stroke="#4a6a86" stroke-width="1.200"/><path d="M4 0v8M0 4h8M1 1l6 6M7 1L1 7" stroke="#f06a10" stroke-width="1.200"/><circle cx="4" cy="4" r="2" fill="#ffd83a"/></svg></div>
          <div class="fill"></div>
          <div class="hscroll"><i class="la"></i><i class="ra"></i></div>
        </div>
      </div>
    </div>
    <nav class="ptabsv">
      <span class="on"><svg><use href="#home"/></svg></span><span><svg><use href="#books"/></svg></span><span><svg><use href="#folder"/></svg></span><span><svg><use href="#drwicon"/></svg></span><span><svg><use href="#sphere"/></svg></span><span><svg><use href="#propicon"/></svg></span>
    </nav>
  </div>
  <aside class="pane">
    <div class="pane-head"><svg viewBox="0 0 11 10"><path d="M5 1L1.500 5 5 9M10 1L6.500 5 10 9" fill="none" stroke="#222" stroke-width="1.500"/></svg><b data-w="137">SOLIDWORKS Res...</b><svg class="g"><use href="#gear"/></svg><svg class="p"><use href="#pin"/></svg></div>
    <div class="pane-body">
      <div class="row welcome"><svg><use href="#home"/></svg><p><span data-w="69">Welcome to</span><br><span data-w="79">SOLIDWORKS</span></p></div>
      <h3 class="sec-tools"><b data-w="122">SOLIDWORKS Tools</b><i class="fold"></i></h3>
      <div class="row one first-row"><svg viewBox="0 0 20 20"><use href="#sw"/><use href="#doc"/></svg><p><span data-w="120">Property Tab Builder</span></p></div>
      <div class="row one"><svg viewBox="0 0 20 20"><use href="#sw"/><use href="#rx"/></svg><p><span data-w="98">SOLIDWORKS Rx</span></p></div>
      <div class="row two-line"><svg viewBox="0 0 20 20"><use href="#sw"/><use href="#rx"/></svg><p><span data-w="74">Performance</span><br><span data-w="91">Benchmark Test</span></p></div>
      <div class="row one after-two"><svg><use href="#score"/></svg><p><span data-w="113">Compare My Score</span></p></div>
      <div class="row one"><svg><use href="#wizard"/></svg><p><span data-w="125">Copy Settings Wizard</span></p></div>
      <div class="row one"><svg viewBox="0 0 20 20"><use href="#sw" width="14" height="14"/><use href="#person"/></svg><p><span data-w="73">My Products</span></p></div>
      <h3 class="sec-online"><b data-w="106">Online Resources</b><i class="fold"></i></h3>
      <div class="row two-line market"><svg><use href="#globe3d"/></svg><p><span data-w="88">3DEXPERIENCE</span><br><span data-w="72">Marketplace</span></p></div>
      <div class="row one after-two"><svg><use href="#hands"/></svg><p><span data-w="99">Partner Solutions</span></p></div>
      <h3 class="sec-subs"><span><b data-w="77">Subscription</b><br><b class="out" data-w="49">Services</b></span><i class="fold"></i></h3>
      <div class="row one subs-row"><svg><use href="#subs"/></svg><p><span data-w="123">Subscription Services</span></p></div>
    </div>
  </aside>
</main>

<footer class="status">
  <span data-w="370">SOLIDWORKS Education Edition - Instructional Use Only</span><span data-w="69">647.45mm</span><span data-w="61">94.58mm</span><span data-w="34">0mm</span><span data-w="96">Under Defined</span><span data-w="95">Editing Sheet1</span><span data-w="26">5 : 1</span><i class="caretup"></i>
  <svg viewBox="0 0 16 16"><path d="M1 10L5.500 1 10 10z" fill="#f8c020" stroke="#6a4a08"/><path d="M5.500 4v3M5.500 8v1" stroke="#222"/><path d="M9 9q4-2 4-6M11 4l2.500-3L16 4" fill="none" stroke="#222" stroke-width="1.600"/><path d="M1 13h14M1 15h14" stroke="#2d5f84" stroke-width="1.600" stroke-dasharray="3 1"/></svg>
  <span data-w="44">MMGS</span><i class="caretup"></i>
  <svg viewBox="0 0 16 16"><path d="M1 4l6-3 8 4-2 6-5 3L1 8z" fill="#eee" stroke="#444" stroke-width="1.200"/><path d="M1 4l8 4 6-3M9 8l-1 6M4 4l6 3" fill="none" stroke="#444"/></svg>
</footer>

<footer class="taskbar">
  <div class="weather">
    <svg viewBox="0 0 34 34" width="36" height="38"><path d="M7 32a6 6 0 0 1-1-12 9 9 0 0 1 17-4 8 8 0 0 1 5 16z" fill="url(#gCloud)"/><circle cx="24" cy="10" r="9.500" fill="#ff99a4"/><text x="20" y="15" class="badge">2</text></svg>
    <div><span data-w="32">33°C</span><span class="dimt" data-w="48">Cloudy</span></div>
  </div>
  <svg class="start" viewBox="0 0 29 29"><path d="M0 0h14v14H0zM15 0h14v14H15zM0 15h14v14H0zM15 15h14v14H15z" fill="url(#gWin)"/></svg>
  <div class="tsearch"><svg viewBox="0 0 20 20"><circle cx="8.500" cy="8.500" r="6.500" fill="#555" stroke="#ddd" stroke-width="1.800"/><path d="M13.500 13.500l5 5" stroke="#ddd" stroke-width="2.400"/></svg><span data-w="52">Search</span></div>
  <div class="apps">
    <span><svg viewBox="0 0 32 32"><rect x="10" y="3" width="21" height="21" rx="2" fill="#f2f2f2"/><rect x="1" y="10" width="22" height="20" rx="2" fill="#777" opacity=".85"/></svg></span>
    <span class="dotd"><svg viewBox="0 0 32 32"><path d="M1 4h11l3 3h14v6H1z" fill="#e8a80c"/><rect x="1" y="8" width="30" height="22" rx="2" fill="#ffd04a"/><path d="M6 30v-5q0-3 3-3h14q3 0 3 3v5z" fill="#0f6fd0"/><path d="M11 26h10" stroke="#0a4d96" stroke-width="2"/></svg></span>
    <span><svg viewBox="0 0 32 32"><circle cx="17" cy="7" r="5" fill="#7b83eb"/><circle cx="26" cy="8" r="3.500" fill="#5059c9"/><path d="M10 12h15v10a7 7 0 0 1-14 3z" fill="#7b83eb"/><path d="M24 13h7v8a5 5 0 0 1-6 4z" fill="#5059c9"/><rect x="1" y="9" width="15" height="15" rx="2" fill="#4b53bc"/><path d="M5 13h7M8.500 13v8" stroke="#fff" stroke-width="2"/></svg></span>
    <span><svg viewBox="0 0 32 32"><path d="M4 2v28l14-14z" fill="#2a7fe8"/><path d="M4 2l14 14 5-5z" fill="#2fa84f"/><path d="M4 30l14-14 5 5z" fill="#ea4335"/><path d="M23 11l8 5-8 5-5-5z" fill="#fbbc04"/></svg></span>
    <span><svg viewBox="0 0 32 32"><path d="M10 3h9q3 0 4 4l-7 15q-1 4-5 4H6q-4 0-3-5L7 7q1-4 3-4z" fill="url(#gCopL)"/><path d="M21 29h-8q-3 0-3-3l5-1 4-14q1-4 5-4h3q4 0 3 5l-5 13q-1 4-4 4z" fill="url(#gCopR)"/></svg></span>
    <span><svg viewBox="0 0 32 32"><path d="M10 7V4q0-2 2-2h8q2 0 2 2v3" fill="none" stroke="#2aa5e8" stroke-width="2.400"/><path d="M1 7h30v20q0 4-4 4H5q-4 0-4-4z" fill="#f4f4f4"/><path d="M10 12h5.500v5.500H10z" fill="#f25022"/><path d="M16.500 12H22v5.500h-5.500z" fill="#7fba00"/><path d="M10 18.500h5.500V24H10z" fill="#00a4ef"/><path d="M16.500 18.500H22V24h-5.500z" fill="#ffb900"/></svg></span>
    <span class="dotd"><svg viewBox="0 0 32 32"><circle cx="16" cy="16" r="15" fill="url(#gEdge)"/><path d="M13 20q0-7 7-7 4 0 6 4l4 2q2 12-15 12-7-4-2-11z" fill="#0c4a94"/><path d="M15 19q0 5 7 5 5 0 8-3v-5q-4 5-9 1-3-2-6 2z" fill="#1c1c1c"/><circle cx="9" cy="24" r="7" fill="#ccc"/><circle cx="9" cy="22" r="3" fill="#666"/><path d="M4 29q1-4 5-4t5 4z" fill="#666"/></svg></span>
    <span class="dotd"><svg viewBox="0 0 32 32"><ellipse cx="16" cy="16" rx="14" ry="14.500" fill="none" stroke="#d81440" stroke-width="1.800"/><ellipse cx="16" cy="16" rx="6.500" ry="12.500" fill="none" stroke="#d81440" stroke-width="1.800"/></svg></span>
    <span class="dotd"><svg viewBox="0 0 32 32"><circle cx="16" cy="16" r="15" fill="#1ed760"/><path d="M7 11q10-3 19 2M8 16.500q8-2.500 16 1.500M9 21.500q7-2 13 1.500" fill="none" stroke="#111" stroke-width="2.600" stroke-linecap="round"/></svg></span>
    <span class="dotd"><svg viewBox="0 0 32 32"><path d="M3 29.500l2-7.500A13.500 13.500 0 1 1 10 27.500z" fill="none" stroke="#25d366" stroke-width="2.800"/><path d="M11 9q-4 4 1 9t10 5q3-1 2-4l-4-2-2 2q-4-2-5-5l2-2-2-4z" fill="#25d366"/></svg></span>
    <span class="act"><svg viewBox="0 0 32 32"><path d="M2 7l13-6 15 4v21l-14 5L2 26z" fill="#c8141c"/><path d="M2 7l13-6 15 4-14 5z" fill="#f03a3a"/><path d="M16 10v21l14-5V5z" fill="#7c0c10"/><path d="M12 12q-7-3-7 1.500t6 4-5 5.500" fill="none" stroke="#fff" stroke-width="3"/><path d="M17 11l2.500 11 3-8 2.500 6 3-12" fill="none" stroke="#fff" stroke-width="2.600"/><text x="14" y="31" class="yr" textLength="17">2021</text></svg></span>
  </div>
  <div class="tray">
    <svg class="c1" viewBox="0 0 20 20"><path d="M4 13l6-6 6 6" fill="none" stroke="#fff" stroke-width="2"/></svg>
    <svg class="c2" viewBox="0 0 20 20"><path d="M1 3.500Q6 3.500 9.500 1 13 3.500 18 3.500V9q0 7-8.500 10Q1 16 1 9z" fill="url(#gShield)"/><path d="M9 19.500l5.500-11 5.500 11z" fill="#ffc21a"/><path d="M14.500 12v4M14.500 17.300v1.200" stroke="#222" stroke-width="1.300"/></svg>
    <div class="lang"><span data-w="29">ENG</span><span data-w="14">IN</span></div>
    <svg class="c3" viewBox="0 0 20 20"><path d="M1 8q9-8 18 0M4 11q6-5.500 12 0M7 14q3-3 6 0" fill="none" stroke="#fff" stroke-width="1.700"/><circle cx="10" cy="16" r="1.800" fill="#fff"/></svg>
    <svg class="c3" viewBox="0 0 20 20"><path d="M1 7.500h3.500L9 3.500v13l-4.500-4H1z" fill="none" stroke="#fff" stroke-width="1.400"/><path d="M11.500 7.500q2 2.500 0 5M14 5.500q3.500 4.500 0 9M16.500 3.500q5 6.500 0 13" fill="none" stroke="#fff" stroke-width="1.400"/></svg>
    <svg class="c3" viewBox="0 0 20 20"><path d="M9 5.500h7q1.500 0 1.500 1.500v7q0 1.500-1.500 1.500H4q-2 0-2-2M18 8.500h1.500v4H18" fill="none" stroke="#fff" stroke-width="1.500"/><path d="M1 12Q0 4 8 1.500 10 12 1 12zM1.500 15L5 8" fill="#fff" stroke="#fff"/></svg>
    <div class="clock"><span data-w="36">11:25</span><span data-w="77">13-07-2025</span></div>
    <svg class="c4" viewBox="0 0 20 20"><path d="M2 15q2-1 2-4V8q0-5 5-5.500h3L16 9v2q0 3 2 4v1H2zM7 17h6q-3 3.500-6 0z" fill="#fff"/><path d="M14 1h4l-4 4.500h4" fill="none" stroke="#fff" stroke-width="1.200"/><path d="M7 7h4l-4 5h4" fill="none" stroke="#1c1c1c" stroke-width="1.300"/></svg>
  </div>
</footer>
<script src="app.js"></script>
</body>
</html>
```
FILE: styles.css
```css
* { box-sizing: border-box; }
html, body { margin: 0; }
body { width: 1920px; height: 1080px; overflow: hidden; display: flex; flex-direction: column; background: #f7f7f7; color: #1a1a1a; font: 15px/19px "Open Sans", "Noto Sans", sans-serif; }
svg { display: block; flex: none; }
.defs { position: absolute; }
[data-w] { white-space: pre; display: inline-block; flex: none; width: max-content; }
.caret { width: 0; height: 0; border: 4px solid transparent; border-top: 4.500px solid #333; border-bottom: 0; flex: none; }
.caret.dim { border-top-color: #888; }
.dot { width: 6px; height: 6px; border: 1px solid #888; border-radius: 50%; background: #ccc; }

/* title bar */
.titlebar { height: 41px; border-top: 1px solid #808080; border-bottom: 1px solid #808080; display: flex; align-items: center; padding-bottom: 1px; }
.brand { width: 145px; padding: 0 0 1px 4px; display: flex; align-items: center; gap: 5px; }
.ds { width: 21px; height: 24px; }
.brand-name { font-size: 13px; font-style: italic; color: #da291c; font-weight: 400; }
.brand-name b { font-weight: 800; }
.menu { display: flex; gap: 16px; width: 279px; padding-top: 2px; }
.menu-pin { width: 15px; height: 15px; color: #777; margin: 0 0 1px 5px; }
.quick { margin-left: 5px; border-left: 1px solid #bbb; height: 39px; padding-left: 18px; display: grid; grid-template-columns: 32px 32px 15px 32px 15px 32px 15px 32px 15px 32px 15px 32px 16px 32px 15px 32px 33px 32px 15px; align-items: center; justify-items: center; width: 540px; }
.quick svg { width: 20px; height: 20px; }
.quick .flip { transform: scaleX(-1); }
.cursor-btn, .cursor-drop { height: 32px; width: 32px; background: #b2b2b2; border: 1px solid #808080; display: grid; place-items: center; }
.cursor-drop { width: 15px; background: #f7f7f7; border-left: 0; }
.doc-title { width: 466px; padding: 1px 0 0 43px; }
.search { width: 252px; height: 29px; border: 1px solid #aaa; background: #fff; display: flex; align-items: center; color: #555; padding-left: 7px; }
.search span { margin-left: 7px; }
.search .mag { width: 18px; height: 18px; margin-left: 71px; }
.search .caret { margin-left: 8px; border-top-color: #777; }
.win { display: grid; grid-template-columns: repeat(5, 41px); justify-items: center; margin-left: 3px; }
.win svg { width: 20px; height: 20px; }

/* view toolbar */
.viewbar { height: 32px; border-bottom: 1px solid #808080; }
.viewtools { width: 457px; height: 31px; padding-bottom: 1px; border-right: 1px solid #808080; display: grid; grid-template-columns: 13.500px 27px 27px 27px 8px 27px 27px 27px 27px 22px 27px 18px 27px 18px 27px 27px 27px 19px 27px; align-items: center; justify-items: center; }
.viewtools svg { width: 20px; height: 20px; }
.grip { width: 2px; height: 26px; background: repeating-linear-gradient(#999 0 2px, transparent 2px 5px); }
.vline { width: 1px; height: 22px; background: #888; }

/* ribbon */
.ribbon { height: 82px; border-bottom: 1px solid #808080; display: flex; position: relative; padding-top: 1px; }
.big { display: flex; flex-direction: column; align-items: center; padding-top: 5px; height: 78px; position: relative; }
.big > svg { width: 20px; height: 20px; }
.big > span { line-height: 19px; }
.big .caret { position: absolute; bottom: 8px; left: 50%; margin-left: -4px; }
.split { border-left: 1px solid #bbb; }
.w120 { width: 120px; } .w48 { width: 48px; } .w60 { width: 60px; } .w56 { width: 56px; } .w42 { width: 43px; } .w128 { width: 128px; } .w50 { width: 51px; }
.big.w48:not(.split) { padding-right: 3px; }
.abc { height: 20px; text-align: center; position: relative; width: 30px; }
.abc b { font: 600 10px/10px "Open Sans", sans-serif; position: absolute; left: 3px; top: -1px; }
.abc svg { width: 14px; height: 14px; position: absolute; left: 9px; top: 8px; }
.note-a { font: 700 24px/20px "Liberation Serif", serif; color: #25709a; height: 20px; -webkit-text-stroke: .6px #1d4a66; }
.aaa { height: 20px; font: 7px/8px "Open Sans", sans-serif; display: flex; flex-direction: column; padding-top: 4px; letter-spacing: .7px; }
.aaa em { font-style: normal; color: #2d7faa; }
.stack { display: flex; flex-direction: column; }
.stack > div { height: 26px; display: flex; align-items: center; gap: 6px; }
.stack > .off { color: #b0b0b0; }
.stack svg { width: 19px; height: 19px; }
.w124 { width: 124px; } .stack.first { margin-left: 3px; }
.w122 { width: 120px; } .w165 { width: 165px; padding-left: 4px; } .w127 { width: 131px; padding-left: 4px; } .w140 { width: 136px; }
.collapse { width: 12px; height: 8px; position: absolute; right: 8px; bottom: 9px; }

/* workspace */
.work { height: 843px; display: flex; }
.left { width: 1717px; display: flex; flex-direction: column; position: relative; }
.tabrow { height: 28px; display: flex; align-items: flex-start; position: relative; z-index: 2; }
.tab { height: 28px; background: #d4d4d4; border-right: 1px solid #808080; border-bottom: 1px solid #808080; display: flex; align-items: center; justify-content: center; color: #333; }
.tab.on { background: #f7f7f7; font-weight: 700; margin-top: -1px; height: 29px; }
.t1 { width: 75px; } .t2 { width: 103px; } .t3 { width: 62px; } .t4 { width: 70px; } .t5 { width: 74px; } .t6 { width: 173px; } .t7 { width: 109px; }
.hruler { width: 1050px; height: 24px; }
.ruler-num { font: 10px "Liberation Sans", sans-serif; text-anchor: middle; }
.body { height: 815px; display: flex; }
.vruler { width: 24px; height: 815px; }
.center { width: 1693px; }
.upper { height: 795px; display: flex; }
.tree-panel { width: 273px; border-right: 1px solid #808080; background: #f7f7f7; display: flex; flex-direction: column; overflow: hidden; }
.dotbar { height: 21px; margin-right: 2px; border-top: 1px solid #c4c4c4; border-bottom: 1px solid #c4c4c4; margin-top: 1px; display: grid; place-items: center; flex: none; }
.ptabs { height: 30px; padding: 4px 0 0 2px; display: flex; align-items: flex-end; border-bottom: 1px solid #aaa; margin-right: 2px; flex: none; }
.pt { width: 40px; height: 26px; background: #d4d4d4; border: 1px solid #999; border-bottom: 0; display: grid; place-items: center; }
.pt.on { background: #f7f7f7; border-left: 0; border-right: 0; width: 39px; }
.pt svg { width: 19px; height: 19px; }
.chev { width: 8px; height: 12px; margin: 0 6px 7px auto; }
.filter { height: 32px; width: 262px; margin-left: 5px; border: 1px solid #bbb; padding: 7px 0 0 2px; flex: none; }
.filter svg { width: 18px; height: 18px; }
.tree { list-style: none; margin: 0; padding: 0; font-size: 16px; flex: 1; overflow: hidden; width: 270px; }
.tree li { height: 24px; display: flex; align-items: center; white-space: nowrap; color: #111; }
.tree svg { width: 19px; height: 18px; }
.tree .hat { width: 20px; margin: 0 4px 2px 4px; }
.tree .l0 { padding-left: 3px; } .tree .l0 .hat { margin-left: 5px; }
.tree .l1 { padding-left: 27px; } .tree .l1 span, .tree .l3 span { margin-left: 4px; }
.tree .l2 { padding-left: 8px; } .tree .l3 { padding-left: 33px; }
.tree .down { border: 4px solid transparent; border-top: 5px solid #555; border-bottom: 0; margin-right: 10px; }
.tree .right { border: 4px solid transparent; border-left: 5px solid #555; border-right: 0; margin-right: 12px; }
.plain { font-weight: 400; }
.hs { height: 24px; margin-right: 2px; border-top: 1px solid #fff; border-bottom: 1px solid #aaa; background: #f0f0f0; padding: 8px 0 0 22px; flex: none; }
.hs i { display: block; width: 195px; height: 3px; border-radius: 2px; background: #858585; }
.canvas { width: 1402px; height: 799px; margin-top: -4px; position: relative; }
.drawing { width: 1402px; height: 799px; }
.zones text { font: 9.500px Lato, sans-serif; text-anchor: middle; fill: #000; }
.views { fill: none; stroke: #000; stroke-width: 1; shape-rendering: crispEdges; }
.callouts text { font: 700 4px "Liberation Sans", sans-serif; fill: #000; }
.tb-small text { font: 700 8px "Liberation Sans", sans-serif; }
.tb-big text { font: 27px Lato, sans-serif; }
.tb-big .a1 { font-size: 18px; }
.hud { position: absolute; left: 568px; top: 6px; display: grid; grid-template-columns: 26px 26px 26px 26px 26px 26px 26px 14px 26px 15px 26px; align-items: center; justify-items: center; opacity: .7; }
.hud svg { width: 20px; height: 20px; }
.hud .caret { border-top-color: #777; }
.docwin { position: absolute; left: 1266px; top: 9px; display: grid; grid-template-columns: repeat(5, 26px); justify-items: center; fill: none; stroke: #8f949f; stroke-width: 1.200; }
.docwin svg { width: 14px; height: 14px; }
.handle { position: absolute; left: -1px; top: 375px; width: 12px; height: 49px; border: 1px solid #808080; border-left: 0; background: #f7f7f7; display: grid; place-items: center; }
.vscroll { width: 18px; height: 799px; margin-top: -4px; background: #f0f0f0; display: flex; flex-direction: column; justify-content: space-between; align-items: center; padding: 8px 2px 5px 0; }
.up { border: 4px solid transparent; border-bottom: 6px solid #a0a0a0; border-top: 0; }
.vscroll .down { border: 4px solid transparent; border-top: 6px solid #a0a0a0; border-bottom: 0; }
.lower { height: 20px; display: flex; border-top: 1px solid #808080; }
.vcr { width: 81px; display: flex; gap: 1px; background: #c6c9d8; }
.vcr svg { width: 19px; height: 19px; background: #a9abc3; border: 1px solid #8f91a8; fill: #7f8199; stroke: #7f8199; }
.stab { width: 94px; display: flex; align-items: center; gap: 2px; padding-left: 15px; color: #000; }
.stab svg { width: 14px; height: 14px; margin-bottom: 5px; }
.snew { width: 42px; background: #d4d4d4; border: 1px solid #808080; border-width: 0 1px; padding: 1px 0 0 10px; }
.snew svg { width: 16px; height: 14px; }
.fill { width: 618px; border-right: 2px solid #555; background: #f7f7f7; }
.hscroll { width: 840px; background: #f0f0f0; display: flex; justify-content: space-between; align-items: center; padding: 0 7px 2px 8px; border-bottom: 3px solid #fff; }
.la { border: 4px solid transparent; border-right: 6px solid #a0a0a0; border-left: 0; }
.ra { border: 4px solid transparent; border-left: 6px solid #a0a0a0; border-right: 0; }
.ptabsv { position: absolute; left: 1684px; top: 82px; z-index: 3; width: 34px; border: 1px solid #808080; border-right: 0; }
.ptabsv span { height: 30px; display: grid; place-items: center; background: #d4d4d4; border-bottom: 1px solid #808080; border-right: 1px solid #808080; }
.ptabsv span:last-child { border-bottom: 0; height: 29px; }
.ptabsv .on { background: #f7f7f7; border-right: 0; height: 29px; }
.ptabsv svg { width: 19px; height: 19px; }

/* task pane */
.pane { width: 203px; border-left: 1px solid #333; background: #f7f7f7; }
.pane-head { height: 23px; background: #b0b0b3; border-bottom: 1px solid #222; display: flex; align-items: center; padding-left: 10px; color: #000; }
.pane-head > svg { width: 11px; height: 10px; }
.pane-head b { margin: 0 1px 0 2px; }
.pane-head .g { width: 16px; height: 16px; }
.pane-head .p { width: 14px; height: 14px; color: #222; margin-left: 5px; }
.pane-body { padding-left: 15px; color: #555; font-size: 13px; line-height: 17px; }
.row { display: flex; align-items: center; gap: 5px; }
.row p { margin: 0; }
.row svg { width: 20px; height: 20px; margin-left: 1px; margin-bottom: 3px; }
.row.welcome { padding-top: 34px; }
.row.welcome svg { width: 18px; height: 18px; margin-bottom: 0; }
h3 { margin: 0; width: 157px; border-top: 1px solid #808080; display: flex; align-items: center; justify-content: space-between; padding: 0 10px 0 4px; font-size: 13px; color: #333; line-height: 17px; }
.fold { width: 8px; height: 8px; border: solid #666; border-width: 2px 0 0 2px; transform: rotate(45deg); margin-top: 4px; }
.sec-tools { margin-top: 29px; height: 25px; }
.one { height: 22px; margin-top: 10px; }
.one.first-row { margin-top: 5px; }
.two-line { height: 34px; margin-top: 7px; }
.one.after-two { margin-top: 7px; }
.sec-online { margin-top: 34px; height: 25px; }
.two-line.market { margin-top: 2px; }
.two-line.market + .after-two { margin-top: 6px; }
.sec-subs { margin-top: 34px; height: 35px; }
.out { margin-left: -4px; }
.one.subs-row { margin-top: 6px; }

/* status bar */
.status { height: 22px; border-top: 1px solid #808080; display: grid; grid-template-columns: 1112px 101px 81px 56px 116px 141px 60px 34px 97px 68px 34px 18px; align-items: center; padding-left: 1px; padding-top: 3px; color: #111; }
.caretup { width: 0; border: 4px solid transparent; border-bottom: 4.500px solid #333; border-top: 0; }
.status svg { width: 17px; height: 17px; margin-top: -3px; }

/* taskbar */
.taskbar { height: 60px; background: #1c1c1c; border-top: 1px solid #333; display: flex; align-items: center; color: #fff; }
.weather { width: 503px; display: flex; align-items: center; padding: 0 0 4px 24px; gap: 4px; }
.weather div { display: flex; flex-direction: column; line-height: 20px; padding-top: 4px; }
.dimt { color: #c4c4c4; }
.badge { font: 14px "Open Sans", sans-serif; fill: #222; }
.start { width: 29px; height: 29px; }
.tsearch { width: 275px; height: 39px; margin-left: 16px; border-radius: 20px; background: #3a3a3a; border: 1px solid #4d4d4d; display: flex; align-items: center; gap: 13px; padding-left: 14px; color: #d0d0d0; font-size: 16px; }
.tsearch svg { width: 19px; height: 20px; }
.apps { margin-left: 3px; display: grid; grid-template-columns: repeat(11, 55px); }
.apps span { height: 50px; width: 51px; display: grid; place-items: center; justify-self: center; position: relative; }
.apps svg { width: 29px; height: 29px; }
.dotd::after { content: ""; position: absolute; left: 22px; bottom: 1px; width: 7px; height: 4px; border-radius: 2px; background: #9a9a9a; }
.apps .act { background: #2c2c2c; border: 1px solid #373737; border-radius: 5px; }
.act::after { content: ""; position: absolute; left: 15px; bottom: 0; width: 20px; height: 4px; border-radius: 2px; background: #d79be0; }
.yr { font: italic 700 8px "Liberation Sans", sans-serif; fill: #fff; }
.tray { margin-left: 122px; display: grid; grid-template-columns: 41px 46px 49px 31px 30px 30px 86px 40px; align-items: center; }
.tray svg { width: 20px; height: 20px; }
.tray div { display: flex; flex-direction: column; line-height: 20px; }
.tray .lang { align-items: center; width: 29px; margin-left: -3px; }
.clock { align-items: flex-end; }
.tray .c4 { margin-left: 10px; }
```
FILE: app.js
```js
const NS = 'http://www.w3.org/2000/svg';
function add(parent, tag, attrs, text) {
  const el = document.createElementNS(NS, tag);
  for (const k in attrs) el.setAttribute(k, attrs[k]);
  if (text !== undefined) el.textContent = text;
  parent.appendChild(el);
}

// Drawing views in the feature tree
const tree = document.getElementById('tree');
for (let i = 1; i <= 13; i++) {
  const li = document.createElement('li');
  li.className = 'l3';
  li.innerHTML = '<i class="right"></i><svg><use href="#dview"/></svg><svg class="hat"><use href="#hat"/></svg>' +
    '<b class="plain" data-w="' + (i < 10 ? 99 : 107) + '">Drawing View' + i + '</b>';
  tree.appendChild(li);
}

// Rulers: a label every 100 mm, a tick every 25 mm
const STEP = 31.44;
const h = document.getElementById('hruler');
for (let n = -2; n <= 34; n++) {
  const x = 742.5 + n * STEP;
  if (x > 1705) break;
  if (n % 4 === 0) {
    const v = String(300 + n * 25), w = v.length * 5 + 1;
    add(h, 'path', { d: `M${x} 159v15`, stroke: '#000' });
    add(h, 'rect', { x: x - w / 2, y: 160, width: w, height: 13, fill: '#fff' });
    add(h, 'text', { x: x, y: 170, class: 'ruler-num', textLength: v.length * 4.8 }, v);
  } else add(h, 'path', { d: `M${x} 165v3`, stroke: '#000' });
}
const vr = document.getElementById('vruler');
for (let n = 0; n <= 24; n++) {
  const y = 938.5 - n * STEP;
  if (n % 4 === 0) {
    const v = String(n * 25), w = v.length * 5 + 1;
    add(vr, 'path', { d: `M4 ${y}h15`, stroke: '#000' });
    add(vr, 'rect', { x: 5, y: y - w / 2, width: 13, height: w, fill: '#fff' });
    add(vr, 'text', { x: 0, y: 0, class: 'ruler-num', transform: `translate(13.5 ${y}) rotate(-90)`, textLength: v.length * 4.8 }, v);
  } else add(vr, 'path', { d: `M10 ${y}h3`, stroke: '#000' });
}
add(vr, 'path', { d: 'M10 969.5h3', stroke: '#000' });

// Sheet border zones
const frame = document.getElementById('frame'), zones = document.getElementById('zones');
for (let i = 0; i < 15; i++) {
  const x = 455.5 + i * 62.77;
  add(frame, 'path', { d: `M${x} 195v20M${x} 916v19` });
}
for (let i = 0; i < 11; i++) {
  const y = 250.5 + i * 62.87;
  add(frame, 'path', { d: `M370 ${y}h19M1401 ${y}h19` });
}
for (let n = 16; n >= 1; n--) {
  const x = n === 16 ? 410 : n === 1 ? 1378 : 486 + (15 - n) * 62.77;
  add(zones, 'text', { x: x, y: 209.5 }, n);
  add(zones, 'text', { x: x, y: 930.5 }, n);
}
'MLKJHGFEDCBA'.split('').forEach((c, i) => {
  const y = (i === 0 ? 227 : i === 11 ? 914 : 288 + (i - 1) * 62.8) + 3.7;
  add(zones, 'text', { x: 378.5, y: y }, c);
  add(zones, 'text', { x: 1410.5, y: y }, c);
});

document.querySelectorAll('[data-w]').forEach(el => {
  const w = el.getBoundingClientRect().width, n = el.textContent.length;
  el.style.letterSpacing = ((+el.dataset.w - w) / n).toFixed(3) + 'px';
});
```
